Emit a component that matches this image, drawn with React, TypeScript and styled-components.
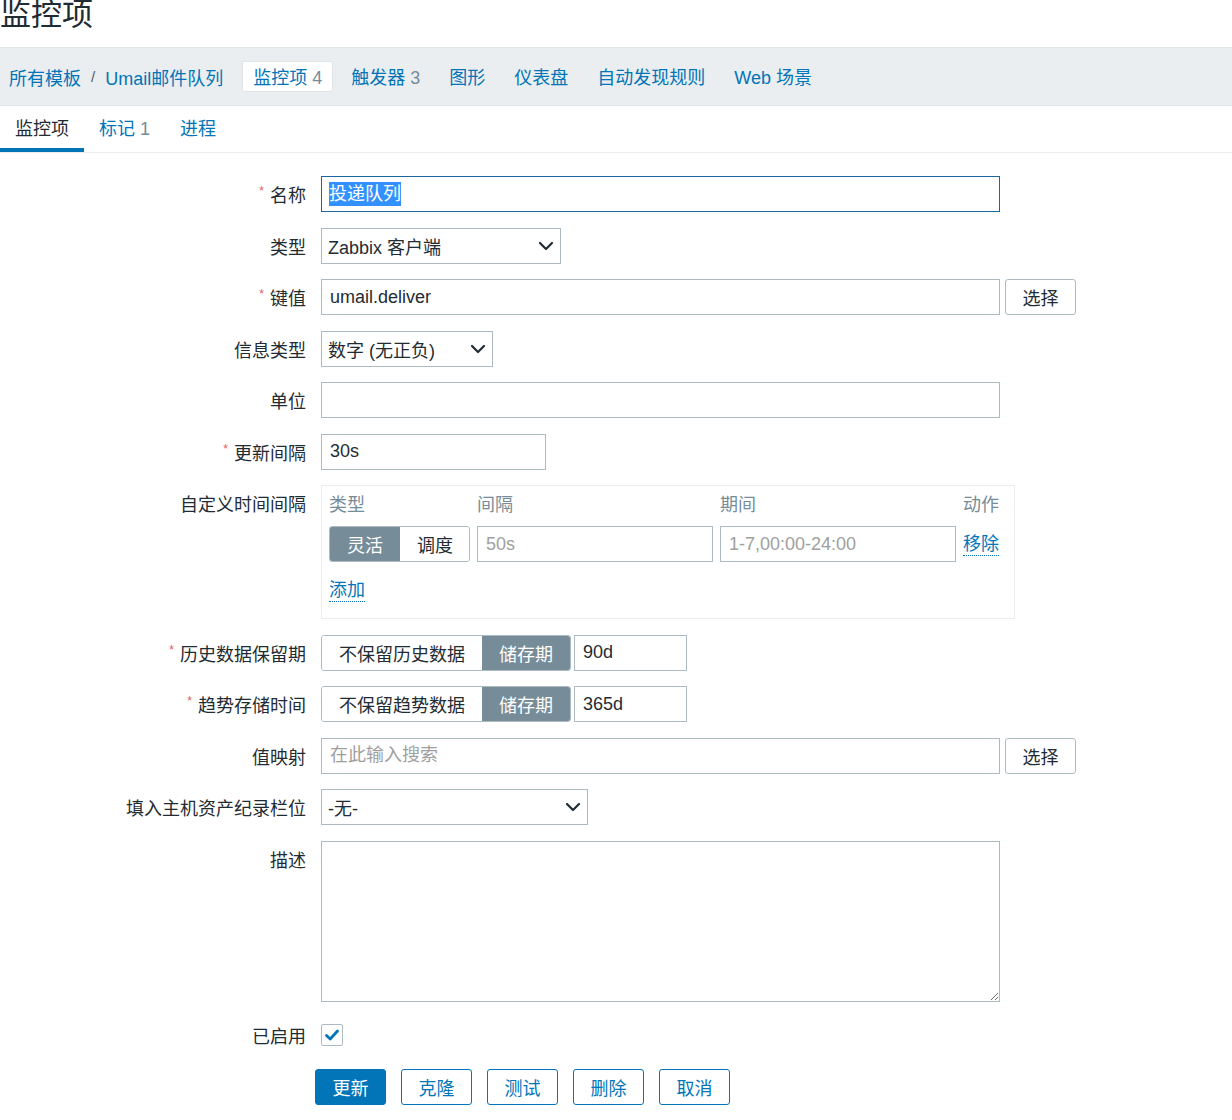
import React from "react";
import styled, { createGlobalStyle } from "styled-components";

const Global = createGlobalStyle`
  html, body { margin: 0; padding: 0; background: #ffffff; }
  body {
    font-family: "Liberation Sans", Arial, "Noto Sans CJK SC", sans-serif;
    font-size: 18px;
    color: #1f2c33;
  }
  * { box-sizing: border-box; }
`;

const Header = styled.header`
  height: 47px;
`;

const Title = styled.h1`
  margin: 0;
  font-size: 31px;
  font-weight: normal;
  line-height: 29px;
  color: #1f2c33;
`;

const Nav = styled.nav`
  height: 59px;
  background: #ebeef0;
  border-top: 1px solid #dfe4e7;
  border-bottom: 1px solid #dfe4e7;
  display: flex;
  align-items: center;
  padding-left: 9px;
`;

const Crumb = styled.a`
  color: #0275b8;
  text-decoration: none;
  white-space: nowrap;
`;

const Sep = styled.span`
  color: #4f5f68;
  font-size: 15px;
  margin: 0 10px 0 10px;
`;

const NavItem = styled.a<{ $active?: boolean; $first?: boolean }>`
  display: block;
  height: 31px;
  line-height: 27px;
  padding: 3px 10px 0;
  margin-left: ${(p) => (p.$first ? "19px" : "7px")};
  color: #0275b8;
  text-decoration: none;
  white-space: nowrap;
  border-radius: 2px;
  background: ${(p) => (p.$active ? "#ffffff" : "transparent")};
  border: 1px solid ${(p) => (p.$active ? "#dfe4e7" : "transparent")};
`;

const Count = styled.span`
  color: #768d99;
  margin-left: 5px;
`;

const Tabs = styled.div`
  display: flex;
  height: 47px;
  border-bottom: 1px solid #ebeef0;
`;

const Tab = styled.a<{ $active?: boolean }>`
  display: block;
  height: 46px;
  line-height: 46px;
  padding: 0 15px;
  white-space: nowrap;
  color: ${(p) => (p.$active ? "#1f2c33" : "#0275b8")};
  text-decoration: none;
  box-shadow: ${(p) => (p.$active ? "inset 0 -4px 0 #0275b8" : "none")};
`;

const Form = styled.div`
  display: grid;
  grid-template-columns: 306px 1fr;
  column-gap: 15px;
  row-gap: 15.5px;
  padding-top: 23px;
`;

const Label = styled.div`
  height: 36px;
  display: flex;
  align-items: center;
  justify-content: flex-end;
  white-space: nowrap;
  align-self: start;
  color: #1f2c33;
`;

const Req = styled.span`
  color: #e45959;
  font-size: 12px;
  line-height: 12px;
  margin-right: 6px;
  transform: translateY(-3px);
`;

const Field = styled.div`
  display: flex;
  align-items: center;
  gap: 5px;
  height: 36px;
`;

const TextInput = styled.input<{ $w: number }>`
  width: ${(p) => p.$w}px;
  height: 36px;
  border: 1px solid #acbbc2;
  border-radius: 0;
  padding: 0 8px;
  font: inherit;
  color: #1f2c33;
  background: #ffffff;
  outline: none;
  display: block;
  &::placeholder { color: #a0a0a0; }
`;

const FocusedBox = styled.div<{ $w: number }>`
  width: ${(p) => p.$w}px;
  height: 36px;
  border: 1px solid #1a669e;
  padding: 0 7px;
  display: flex;
  align-items: center;
`;

const Selected = styled.span`
  background: #3391ff;
  color: #ffffff;
  line-height: 24px;
`;

const SelectBox = styled.div<{ $w: number }>`
  width: ${(p) => p.$w}px;
  height: 36px;
  border: 1px solid #acbbc2;
  padding: 0 6px 0 6px;
  display: flex;
  align-items: center;
  justify-content: space-between;
  background: #ffffff;
  white-space: nowrap;
`;

const GreyButton = styled.button`
  width: 71px;
  height: 36px;
  border: 1px solid #acbbc2;
  border-radius: 3px;
  background: #ffffff;
  color: #1f2c33;
  font: inherit;
`;

const IntervalBox = styled.div`
  width: 694px;
  border: 1px solid #ebeef0;
  padding: 3px 7px 10px 7px;
`;

const IntervalGrid = styled.div`
  display: grid;
  grid-template-columns: 141px 236px 236px auto;
  column-gap: 7px;
  align-items: center;
`;

const ColHead = styled.div`
  color: #768d99;
  height: 33px;
  line-height: 33px;
  margin-bottom: 4px;
`;

const RadioGroup = styled.div`
  display: inline-flex;
  height: 36px;
  border: 1px solid #acbbc2;
  border-radius: 3px;
  overflow: hidden;
`;

const RadioSeg = styled.span<{ $active?: boolean }>`
  display: flex;
  align-items: center;
  padding: 0 17px;
  white-space: nowrap;
  background: ${(p) => (p.$active ? "#768d99" : "#ffffff")};
  color: ${(p) => (p.$active ? "#ffffff" : "#1f2c33")};
`;

const DottedLink = styled.a`
  color: #0275b8;
  text-decoration: none;
  border-bottom: 1px dotted #0275b8;
  line-height: 22px;
  justify-self: start;
`;

const AddRow = styled.div`
  height: 36px;
  display: flex;
  align-items: center;
  margin-top: 10px;
`;

const RetentionField = styled.div`
  display: flex;
  align-items: center;
  gap: 3px;
  height: 36px;
`;

const TextArea = styled.textarea`
  width: 679px;
  height: 161px;
  border: 1px solid #acbbc2;
  border-radius: 0;
  font: inherit;
  padding: 6px 8px;
  resize: both;
  display: block;
  outline: none;
`;

const CheckCell = styled.div`
  height: 36px;
  display: flex;
  align-items: center;
`;

const CheckBox = styled.span`
  width: 22px;
  height: 22px;
  border: 1px solid #acbbc2;
  border-radius: 2px;
  display: flex;
  align-items: center;
  justify-content: center;
  background: #ffffff;
`;

const Buttons = styled.div`
  grid-column: 2;
  margin-left: -6px;
  display: flex;
  gap: 15px;
  padding-bottom: 16px;
`;

const Btn = styled.button<{ $primary?: boolean }>`
  width: 71px;
  height: 36px;
  border-radius: 3px;
  font: inherit;
  border: 1px solid #0275b8;
  background: ${(p) => (p.$primary ? "#0275b8" : "#ffffff")};
  color: ${(p) => (p.$primary ? "#ffffff" : "#0275b8")};
`;

const Chevron = () => (
  <svg width="16" height="10" viewBox="0 0 16 10">
    <path d="M2 2 L8 8 L14 2" fill="none" stroke="#1f2c33" strokeWidth="2.2" strokeLinecap="round" strokeLinejoin="round" />
  </svg>
);

const Select = ({ w, value }: { w: number; value: string }) => (
  <SelectBox $w={w}>
    <span>{value}</span>
    <Chevron />
  </SelectBox>
);

const Required = ({ children }: { children: React.ReactNode }) => (
  <Label>
    <Req>*</Req>
    {children}
  </Label>
);

export default function App() {
  return (
    <>
      <Global />
      <Header>
        <Title>监控项</Title>
      </Header>
      <Nav>
        <Crumb>所有模板</Crumb>
        <Sep>/</Sep>
        <Crumb>Umail邮件队列</Crumb>
        <NavItem $first $active>
          监控项<Count>4</Count>
        </NavItem>
        <NavItem>
          触发器<Count>3</Count>
        </NavItem>
        <NavItem>图形</NavItem>
        <NavItem>仪表盘</NavItem>
        <NavItem>自动发现规则</NavItem>
        <NavItem>Web 场景</NavItem>
      </Nav>
      <Tabs>
        <Tab $active>监控项</Tab>
        <Tab>
          标记<Count>1</Count>
        </Tab>
        <Tab>进程</Tab>
      </Tabs>
      <Form>
        <Required>名称</Required>
        <Field>
          <FocusedBox $w={679}>
            <Selected>投递队列</Selected>
          </FocusedBox>
        </Field>

        <Label>类型</Label>
        <Field>
          <Select w={240} value="Zabbix 客户端" />
        </Field>

        <Required>键值</Required>
        <Field>
          <TextInput $w={679} defaultValue="umail.deliver" />
          <GreyButton>选择</GreyButton>
        </Field>

        <Label>信息类型</Label>
        <Field>
          <Select w={172} value="数字 (无正负)" />
        </Field>

        <Label>单位</Label>
        <Field>
          <TextInput $w={679} defaultValue="" />
        </Field>

        <Required>更新间隔</Required>
        <Field>
          <TextInput $w={225} defaultValue="30s" />
        </Field>

        <Label>自定义时间间隔</Label>
        <div>
          <IntervalBox>
            <IntervalGrid>
              <ColHead>类型</ColHead>
              <ColHead>间隔</ColHead>
              <ColHead>期间</ColHead>
              <ColHead>动作</ColHead>
              <RadioGroup>
                <RadioSeg $active>灵活</RadioSeg>
                <RadioSeg>调度</RadioSeg>
              </RadioGroup>
              <TextInput $w={236} placeholder="50s" />
              <TextInput $w={236} placeholder="1-7,00:00-24:00" />
              <DottedLink>移除</DottedLink>
            </IntervalGrid>
            <AddRow>
              <DottedLink>添加</DottedLink>
            </AddRow>
          </IntervalBox>
        </div>

        <Required>历史数据保留期</Required>
        <RetentionField>
          <RadioGroup>
            <RadioSeg>不保留历史数据</RadioSeg>
            <RadioSeg $active>储存期</RadioSeg>
          </RadioGroup>
          <TextInput $w={113} defaultValue="90d" />
        </RetentionField>

        <Required>趋势存储时间</Required>
        <RetentionField>
          <RadioGroup>
            <RadioSeg>不保留趋势数据</RadioSeg>
            <RadioSeg $active>储存期</RadioSeg>
          </RadioGroup>
          <TextInput $w={113} defaultValue="365d" />
        </RetentionField>

        <Label>值映射</Label>
        <Field>
          <TextInput $w={679} placeholder="在此输入搜索" />
          <GreyButton>选择</GreyButton>
        </Field>

        <Label>填入主机资产纪录栏位</Label>
        <Field>
          <Select w={267} value="-无-" />
        </Field>

        <Label>描述</Label>
        <div>
          <TextArea />
        </div>

        <Label>已启用</Label>
        <CheckCell>
          <CheckBox>
            <svg width="16" height="14" viewBox="0 0 16 14">
              <path d="M2.5 7.5 L6.2 11 L13.5 3" fill="none" stroke="#0275b8" strokeWidth="2.8" strokeLinecap="round" strokeLinejoin="round" />
            </svg>
          </CheckBox>
        </CheckCell>

        <Buttons>
          <Btn $primary>更新</Btn>
          <Btn>克隆</Btn>
          <Btn>测试</Btn>
          <Btn>删除</Btn>
          <Btn>取消</Btn>
        </Buttons>
      </Form>
    </>
  );
}
